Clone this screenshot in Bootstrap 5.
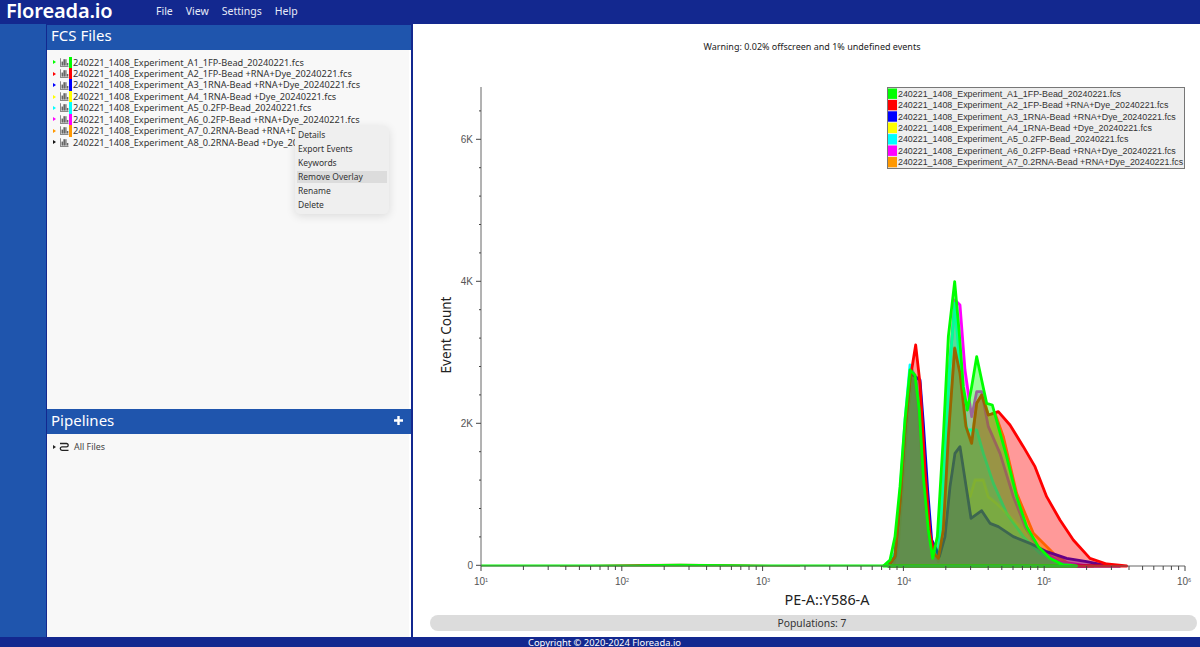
<!DOCTYPE html>
<html lang="en">
<head>
<meta charset="utf-8">
<title>Floreada.io</title>
<link href="https://cdn.jsdelivr.net/npm/bootstrap@5.3.0/dist/css/bootstrap.min.css" rel="stylesheet">
<style>
html,body{height:100%;overflow:hidden}
body{font-family:"Noto Sans",sans-serif;background:#fff;color:#333;display:flex;flex-direction:column;height:647px}
.topbar{height:24px;background:#13288f;color:#fff;padding:0 0 0 6px;flex:none;flex-wrap:nowrap;justify-content:flex-start;align-items:center}
.brandname{font-size:20px;line-height:22px;padding-bottom:2px;font-weight:600;color:#fff;margin:0;width:150px;letter-spacing:-.15px}
.topmenu{gap:13px;font-size:10.5px;color:#e8ecf8}
.workspace{flex:1;min-height:0;display:flex}
.railbar{width:46px;background:#1f55ad;flex:none}
.sidepanel{width:367px;flex:none;display:flex;flex-direction:column;border-right:2px solid #13288f;border-left:1px solid #13288f;border-top:1px solid #13288f;background:#fff;position:relative}
.panelhead{height:25px;background:#1f55ad;color:#fff;font-size:15px;line-height:22px;padding:0 4px 3px;flex:none;display:flex;justify-content:space-between;align-items:center}
.panelhead.firsthead{padding-bottom:5px}
.panelbody{background:#f8f8f8;overflow:hidden;margin-right:2px}
.filesbody{height:359px;padding-top:6.5px}
.pipebody{flex:1;padding-top:7px}
.treerow{height:11.45px;display:flex;align-items:center;font-size:9.2px;line-height:11.45px;white-space:nowrap;color:#333}
.treearrow{width:0;height:0;border-left:3px solid var(--tc);border-top:2px solid transparent;border-bottom:2px solid transparent;margin-left:6px;margin-right:4px;flex:none}
.treeicon{width:8.5px;height:9px;flex:none;margin-right:.5px}
.flowicon{width:10px;height:10px;flex:none;margin-right:5px;margin-left:-1px}
.colorbar{width:3px;height:11.45px;flex:none;margin-right:1px}
.ctxmenu{position:absolute;left:248px;top:101px;width:94px;min-width:0;background:#efefef;border:0;border-radius:5px;padding:2px;font-size:8.5px;box-shadow:0 2px 10px rgba(0,0,0,.12);display:block;z-index:5}
.ctxitem{height:14px;line-height:14px;padding:0 1px;color:#333;display:block;background:transparent}
.ctxitem.hot{background:#dcdcdc;height:12px;line-height:12px;margin:1px 0}
.mainpane{flex:1;min-width:0;display:flex;flex-direction:column;align-items:stretch}
.warnline{height:36px;padding-top:16px;text-align:center;font-size:9px;line-height:14px;padding-left:11px;color:#222;flex:none}
.plotsvg{display:block;flex:none;width:787px;height:555px}
.popbar{height:16px;margin:0 3px 6px 17px;background:#dcdcdc;border-radius:8px;text-align:center;font-size:10.3px;line-height:16px;color:#333;flex:none;padding-right:3px}
.pagefoot{height:10px;background:#13288f;color:#fff;font-size:9.4px;line-height:10px;text-align:center;flex:none;overflow:hidden;border-top:1px solid #13288f;padding-left:9px}
.axl{font-family:"Liberation Sans",sans-serif;font-size:10px;fill:#555}
.axs{font-family:"Liberation Sans",sans-serif;font-size:5.5px;fill:#555}
.axt{font-family:"Noto Sans",sans-serif;font-size:13.5px;fill:#222}
.axx{font-size:14.4px}
.lgt{font-family:"Liberation Sans",sans-serif;font-size:8.9px;fill:#333}
.crv{stroke-width:2.8;stroke-linejoin:round;vector-effect:non-scaling-stroke;fill-opacity:.4}
.crvsoft{stroke-opacity:.3;fill-opacity:.15}
</style>
</head>
<body>
<nav class="navbar topbar">
  <span class="brandname">Floreada.io</span>
  <div class="d-flex topmenu"><span>File</span><span>View</span><span>Settings</span><span>Help</span></div>
</nav>
<div class="workspace">
  <div class="railbar"></div>
  <div class="sidepanel">
    <div class="panelhead firsthead">FCS Files</div>
    <div class="panelbody filesbody" id="files"></div>
    <div class="panelhead">Pipelines<svg width="9" height="9" viewBox="0 0 9 9" class="me-1"><path d="M3.300 0h2.400v3.300H9v2.400H5.700V9H3.300V5.700H0V3.300h3.300z" fill="#fff"/></svg></div>
    <div class="panelbody pipebody">
      <div class="treerow">
        <span class="treearrow" style="--tc:#222"></span>
        <svg class="flowicon" viewBox="0 0 10 10" fill="none" stroke="#222" stroke-width="1.300"><path d="M1 1.500H7.500a1.700 1.700 0 0 1 0 3.400H3a1.700 1.700 0 0 0 0 3.400H9.500"/></svg>
        <span style="color:#444;font-size:8.9px">All Files</span>
      </div>
    </div>
    <div class="dropdown-menu ctxmenu">
      <span class="ctxitem">Details</span>
      <span class="ctxitem">Export Events</span>
      <span class="ctxitem">Keywords</span>
      <span class="ctxitem hot">Remove Overlay</span>
      <span class="ctxitem">Rename</span>
      <span class="ctxitem">Delete</span>
    </div>
  </div>
  <div class="mainpane">
    <div class="warnline">Warning: 0.02% offscreen and 1% undefined events</div>
    <svg class="plotsvg" viewBox="413 60 787 555" id="plot">
      <g transform="translate(860 270) scale(.33333)">
        <polygon class="crv" fill="#ffa500" stroke="#ffa500" points="100,888 115,830 130,620 145,420 160,310 175,420 190,640 205,800 235,875 255,700 270,430 284,232 298,290 315,460 333,520 350,400 368,372 385,435 405,430 430,500 470,670 520,790 580,850 630,885 700,888"/>
        <polygon class="crv" fill="#f0f" stroke="#f0f" points="85,888 105,850 120,680 135,470 150,310 165,320 180,440 195,640 210,800 222,850 235,850 250,640 268,300 285,90 300,105 315,300 335,440 350,365 365,365 385,470 420,550 460,680 500,780 540,840 600,875 680,888"/>
        <polygon class="crv" fill="#0ff" stroke="#0ff" points="85,888 105,850 120,670 135,450 150,285 165,320 180,440 195,640 210,800 222,850 235,855 250,640 268,300 285,100 300,300 320,480 350,480 370,550 400,640 440,730 490,800 540,850 600,880 660,888"/>
        <polygon class="crv crvsoft" fill="#ff0" stroke="#ff0" points="85,888 105,860 120,690 135,480 155,315 170,330 183,450 198,650 212,810 225,855 240,860 255,760 270,620 285,560 300,535 318,640 330,680 345,630 370,630 385,680 410,700 440,730 480,770 530,815 590,865 650,888"/>
        <polygon class="crv" fill="#00f" stroke="#0000e0" points="85,888 105,860 120,690 135,480 152,310 180,330 190,460 203,660 215,810 225,830 238,860 255,800 270,650 285,550 300,530 320,660 333,745 365,722 390,760 415,770 460,800 510,820 560,845 620,865 680,875 730,885 780,888"/>
        <polygon class="crv" fill="#f00" stroke="#f00" points="85,888 105,860 120,700 135,480 150,330 167,225 180,340 195,600 210,790 222,850 235,865 250,780 265,500 284,235 300,310 318,470 335,520 350,400 365,375 385,435 415,425 450,465 490,530 525,590 560,680 600,750 640,810 690,865 740,882 800,888"/>
        <polygon class="crv" fill="#0f0" stroke="#0f0" points="70,888 90,870 105,800 120,650 135,450 150,300 165,315 178,420 190,620 205,780 218,865 232,800 250,500 265,200 284,35 297,180 310,350 322,420 335,350 350,260 365,330 380,400 397,405 415,470 440,560 470,680 500,770 535,830 570,865 610,885 650,888"/>
      </g>
      <path d="M560 566 600 565.300 640 564.500 680 564.300 720 564.600 760 565.300 800 566Z" fill="#f00" fill-opacity=".25" stroke="#d33" stroke-width="1"/>
      <path d="M481 565.600H890" stroke="#0f0" stroke-width="2" fill="none"/>
      <path d="M640 564.800 680 564.400 720 564.800 750 565.400" stroke="#0f0" stroke-width="1.200" fill="none"/>
      <path id="axes" d="M481 87V566H1185" stroke="#666" stroke-width="1" fill="none"/>
      <path id="ticks" stroke="#444" stroke-width="1" fill="none"/>
      <text class="axl" x="473" y="143" text-anchor="end">6K</text>
      <text class="axl" x="473" y="285" text-anchor="end">4K</text>
      <text class="axl" x="473" y="427" text-anchor="end">2K</text>
      <text class="axl" x="473" y="569" text-anchor="end">0</text>
      <text class="axl" x="481" y="585" text-anchor="middle">10<tspan class="axs" dy="-3">1</tspan></text>
      <text class="axl" x="622" y="585" text-anchor="middle">10<tspan class="axs" dy="-3">2</tspan></text>
      <text class="axl" x="763" y="585" text-anchor="middle">10<tspan class="axs" dy="-3">3</tspan></text>
      <text class="axl" x="904" y="585" text-anchor="middle">10<tspan class="axs" dy="-3">4</tspan></text>
      <text class="axl" x="1044" y="585" text-anchor="middle">10<tspan class="axs" dy="-3">5</tspan></text>
      <text class="axl" x="1184" y="585" text-anchor="middle">10<tspan class="axs" dy="-3">6</tspan></text>
      <text class="axt axx" x="827" y="605" text-anchor="middle">PE-A::Y586-A</text>
      <text class="axt" transform="translate(451 335) rotate(-90)" text-anchor="middle">Event Count</text>
      <g id="legend">
        <rect x="887.500" y="87.500" width="297" height="81" fill="#eee" stroke="#777"/>
      </g>
    </svg>
    <div class="popbar">Populations: 7</div>
  </div>
</div>
<footer class="pagefoot">Copyright © 2020-2024 Floreada.io</footer>
<script src="https://cdn.jsdelivr.net/npm/bootstrap@5.3.0/dist/js/bootstrap.bundle.min.js"></script>
<script>
const F=[["240221_1408_Experiment_A1_1FP-Bead_20240221.fcs","#0f0"],["240221_1408_Experiment_A2_1FP-Bead +RNA+Dye_20240221.fcs","#f00"],["240221_1408_Experiment_A3_1RNA-Bead +RNA+Dye_20240221.fcs","#00f"],["240221_1408_Experiment_A4_1RNA-Bead +Dye_20240221.fcs","#ff0"],["240221_1408_Experiment_A5_0.2FP-Bead_20240221.fcs","#0ff"],["240221_1408_Experiment_A6_0.2FP-Bead +RNA+Dye_20240221.fcs","#f0f"],["240221_1408_Experiment_A7_0.2RNA-Bead +RNA+Dye_20240221.fcs","#ff9800"],["240221_1408_Experiment_A8_0.2RNA-Bead +Dye_20240221.fcs","#111"]];
const ic='<svg class="treeicon" viewBox="0 0 9 9" fill="#666"><path d="M0 0h.8v8.200H9V9H0z"/><rect x="1.600" y="3.500" width="1.700" height="4.300"/><rect x="3.600" y="1" width="1.700" height="6.800"/><rect x="5.600" y="1" width="1.300" height="6.800"/><rect x="7.200" y="5" width="1.600" height="2.800"/></svg>';
document.getElementById('files').innerHTML=F.map(([n,c],i)=>`<div class="treerow"><span class="treearrow" style="--tc:${c}"></span>${ic}<span class="colorbar" style="background:${i<7?c:'transparent'}"></span><span>${n}</span></div>`).join('');
let d='';
const D=140.8,X0=481,Y=566;
for(let k=0;k<5;k++)for(let m=1;m<10;m++){const x=X0+(k+Math.log10(m))*D;d+=`M${x.toFixed(1)} ${Y}v${m==1?5:4}`}
d+=`M${X0+5*D} ${Y}v5`;
for(let i=0;i<17;i++){const y=565.3-i*28.4;d+=i%5==0?`M476 ${y}h5`:`M479 ${y}h2`}
document.getElementById('ticks').setAttribute('d',d);
const L=document.getElementById('legend'),NS='http://www.w3.org/2000/svg';
F.slice(0,7).forEach(([n,c],i)=>{const y=88.5+i*11.4;
const r=document.createElementNS(NS,'rect');r.setAttribute('x',888);r.setAttribute('y',y);r.setAttribute('width',9);r.setAttribute('height',10.4);r.setAttribute('fill',c);L.appendChild(r);
const t=document.createElementNS(NS,'text');t.setAttribute('x',898);t.setAttribute('y',y+8.2);t.setAttribute('class','lgt');t.textContent=n;L.appendChild(t);});
</script>
</body>
</html>
